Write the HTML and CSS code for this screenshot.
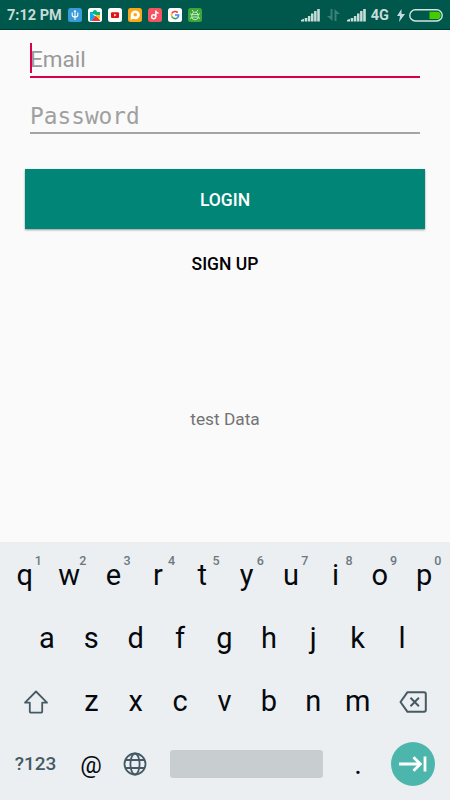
FILE: index.html
```
<!DOCTYPE html>
<html lang="en">
<head>
    <meta charset="UTF-8">
    <meta name="viewport" content="width=device-width, initial-scale=1.0">
    <title>Login</title>
    <link rel="stylesheet" href="styles.css">
</head>
<body>
    <header class="status-bar">
        <span class="time">7:12 PM</span>
        <div class="notifications">
            <svg class="badge usb" viewBox="0 0 14 14"><path d="M7 3v9M4.2 4.5v2.5q0 2 2.8 2t2.8-2v-2.5" fill="none" stroke="#fff" stroke-width="1.1"/><path d="M7 1.5L5.6 4h2.8z" fill="#fff"/></svg>
            <svg class="badge" viewBox="0 0 14 14"><path d="M2 4h3a2 2 0 1 1 4 0h3v3H8L2 5z" fill="#00b58a"/><path d="M2 4l5.5 4.5L3 13H2z" fill="#00aef0"/><path d="M8 7h4v3l-2 1-3-2z" fill="#ffc400"/><path d="M3 13l4.5-5 4.5 4v1z" fill="#f0323c"/></svg>
            <svg class="badge" viewBox="0 0 14 14"><rect x="3" y="4.2" width="8" height="5.8" rx="1" fill="#e11414"/><path d="M6.2 5.8v2.6L8.4 7.1z" fill="#fff"/></svg>
            <svg class="badge chat" viewBox="0 0 14 14"><path d="M2.5 11.8l.3-4a4.6 4.3 0 1 1 2.7 3z" fill="#fff"/><circle cx="7.2" cy="6.8" r="1.8" fill="#fda71a"/></svg>
            <svg class="badge music" viewBox="0 0 14 14"><circle cx="5.7" cy="8.8" r="2" fill="none" stroke="#fff" stroke-width="1.4"/><path d="M7.8 9V2.5q.3 2.2 2.8 2.8" fill="none" stroke="#fff" stroke-width="1.4"/></svg>
            <svg class="badge" viewBox="0 0 14 14" fill="none" stroke-width="1.6"><path d="M9.7 4.6A3.6 3.6 0 0 0 3.8 5.5" stroke="#ea4335"/><path d="M3.8 5.5a3.6 3.6 0 0 0 0 3" stroke="#fbbc05"/><path d="M3.8 8.5a3.6 3.6 0 0 0 5.5 1.3" stroke="#34a853"/><path d="M9.3 9.8Q10.7 8.7 10.6 7H7" stroke="#4285f4"/></svg>
            <svg class="badge debug" viewBox="0 0 14 14" fill="none" stroke="#d6f3cf" stroke-width=".9"><path d="M3.8 6.6a3.3 3.3 0 0 1 6.4 0zM3.8 6.6v2a3.2 3.2 0 0 0 6.4 0v-2M4.4 9h5.2M4.2 2l1.2 1.8M9.8 2L8.6 3.8M2 5.5l1.8 1.3M12 5.5l-1.8 1.3M2 10.5L4 9.4M12 10.5l-2-1.1"/></svg>
        </div>
        <div class="system">
            <svg class="signal" viewBox="0 0 19 14"><path d="M0 13.5V12l3-1.2v2.7zM3.7 13.5V10h2.6v3.5zM6.9 13.5V8h2.5v5.5zM10 13.5V5.5h2.5v8zM13.1 13.5V3h2.5v10.5zM16.2 13.5V1h2.6v12.5z"/></svg>
            <svg class="transfer" viewBox="0 0 13 14"><path d="M3.5 1H5.5V13L0 8H3.5zM7.5 13V1L13 6H9.5V13z"/></svg>
            <svg class="signal" viewBox="0 0 19 14"><path d="M0 13.5V12l3-1.2v2.7zM3.7 13.5V10h2.6v3.5zM6.9 13.5V8h2.5v5.5zM10 13.5V5.5h2.5v8zM13.1 13.5V3h2.5v10.5zM16.2 13.5V1h2.6v12.5z"/></svg>
            <span class="network">4G</span>
            <svg class="bolt" viewBox="0 0 8 13"><path d="M4.5 0L0 7h3L2 13l6-8H4.5z"/></svg>
            <svg class="battery" viewBox="0 0 34 13"><rect x=".8" y=".8" width="32.4" height="11.2" rx="5.6" fill="none" stroke="#d3e5e1" stroke-width="1.4"/><path d="M20.5 2.7H28a3.7 3.7 0 0 1 0 7.4H20.5z" fill="#43cc00"/></svg>
        </div>
    </header>

    <main class="login">
        <div class="field focused">
            <input type="email" placeholder="Email">
            <span class="caret"></span>
        </div>
        <div class="field">
            <input class="mono" type="password" placeholder="Password">
        </div>
        <button class="btn btn-login">LOGIN</button>
        <button class="btn btn-signup">SIGN UP</button>
        <p class="result">test Data</p>
    </main>

    <section class="keyboard">
        <div class="row">
            <span class="key">q<sup>1</sup></span>
            <span class="key">w<sup>2</sup></span>
            <span class="key">e<sup>3</sup></span>
            <span class="key">r<sup>4</sup></span>
            <span class="key">t<sup>5</sup></span>
            <span class="key">y<sup>6</sup></span>
            <span class="key">u<sup>7</sup></span>
            <span class="key">i<sup>8</sup></span>
            <span class="key">o<sup>9</sup></span>
            <span class="key">p<sup>0</sup></span>
        </div>
        <div class="row">
            <span class="key">a</span>
            <span class="key">s</span>
            <span class="key">d</span>
            <span class="key">f</span>
            <span class="key">g</span>
            <span class="key">h</span>
            <span class="key">j</span>
            <span class="key">k</span>
            <span class="key">l</span>
        </div>
        <div class="row">
            <span class="key wide shift">
                <svg width="26" height="26" viewBox="0 0 26 26"><path d="M13 2.5L2 13.7h4.8v9.1q0 .8.8.8h10.8q.8 0 .8-.8v-9.1H24z"/></svg>
            </span>
            <span class="key">z</span>
            <span class="key">x</span>
            <span class="key">c</span>
            <span class="key">v</span>
            <span class="key">b</span>
            <span class="key">n</span>
            <span class="key">m</span>
            <span class="key wide shift">
                <svg class="delete" width="28" height="22" viewBox="0 0 28 22"><path d="M8.5 1.2H25q1.8 0 1.8 1.8v16q0 1.8-1.8 1.8H8.5L1.5 11zM11.5 6.8l8.4 8.4M19.9 6.8l-8.4 8.4"/></svg>
            </span>
        </div>
        <div class="row">
            <span class="key wide symbols">?123</span>
            <span class="key at">@</span>
            <span class="key">
                <svg width="24" height="24" viewBox="0 0 24 24"><circle cx="12" cy="12" r="10.5"/><ellipse cx="12" cy="12" rx="4.6" ry="10.5"/><path d="M2.5 8h19M2.5 16h19"/></svg>
            </span>
            <span class="space"></span>
            <span class="key dot">.</span>
            <span class="key wide">
                <span class="next">
                    <svg width="28" height="18" viewBox="0 0 28 18"><path d="M0 9h21M14.5 2.2L21.3 9l-6.8 6.8M26 1.5v15"/></svg>
                </span>
            </span>
        </div>
    </section>
</body>
</html>
```
FILE: styles.css
```
* {
    box-sizing: border-box;
}

body {
    margin: 0;
    height: 800px;
    display: flex;
    flex-direction: column;
    overflow: hidden;
    background: #fafafa;
    font-family: Roboto, sans-serif;
}

.status-bar {
    height: 30px;
    display: flex;
    align-items: center;
    padding: 1px 7px 0;
    background: #00574b;
    border-bottom: 1px solid #003c2c;
    color: #c7ddd9;
    font-size: 14.5px;
    font-weight: 700;
}

.time {
    width: 61px;
    white-space: nowrap;
}

.notifications {
    display: flex;
    gap: 6px;
}

.badge {
    width: 14px;
    height: 14px;
    border-radius: 2.5px;
    background: #fff;
}

.usb {
    background: #399bd8;
}

.chat {
    background: #fda71a;
}

.music {
    background: #f45362;
}

.debug {
    background: #3ba63b;
}

.system {
    display: flex;
    align-items: center;
    margin-left: auto;
    fill: #c7ddd9;
}

.signal {
    width: 19px;
    height: 14px;
}

.transfer {
    width: 13px;
    height: 14px;
    margin: 0 7px;
    fill: #3c8177;
}

.network {
    margin-left: 5px;
}

.bolt {
    width: 8px;
    height: 13px;
    margin: 0 4px 0 8px;
}

.battery {
    width: 34px;
    height: 13px;
}

.login {
    height: 512px;
    display: flex;
    flex-direction: column;
    padding: 10px 25px 0;
}

.field {
    position: relative;
    height: 38px;
    margin: 0 5px 35px;
    border-bottom: 2px solid #a4a4a4;
}

.field.focused {
    margin-bottom: 18px;
    border-color: #d8004c;
}

.field input {
    display: block;
    width: 100%;
    height: 36px;
    padding: 2px 0 0;
    border: none;
    outline: none;
    background: none;
    font: 22.5px Roboto, sans-serif;
}

.field input.mono {
    padding-top: 4px;
    font: 22.8px "DejaVu Sans Mono", monospace;
}

.field input::placeholder {
    color: #999;
    opacity: 1;
}

.field input.mono::placeholder {
    color: #a0a0a0;
}

.caret {
    position: absolute;
    left: 0;
    top: 3px;
    width: 2px;
    height: 30px;
    background: #d8004c;
}

.btn {
    flex: none;
    padding: 2px 0 0;
    border: none;
    font: 500 17.5px Roboto, sans-serif;
}

.btn-login {
    height: 60px;
    background: #008577;
    color: #fff;
    box-shadow: 0 1px 2px rgba(0, 0, 0, 0.4);
}

.btn-signup {
    height: 68px;
    background: none;
    color: #000;
}

.result {
    margin: 112px 0 0;
    text-align: center;
    font-size: 17.3px;
    line-height: 20px;
    color: #737373;
}

.keyboard {
    height: 258px;
    padding: 1px 3px 0 2px;
    background: #eceff2;
    color: #05090e;
}

.row {
    height: 63px;
    display: flex;
    justify-content: center;
    align-items: center;
}

.key {
    position: relative;
    width: 44.4px;
    flex: none;
    display: flex;
    justify-content: center;
    align-items: center;
    font-size: 29px;
    line-height: 34px;
}

.key.wide {
    width: 66.6px;
}

.key.shift {
    padding-top: 3px;
}

.key sup {
    position: absolute;
    top: -5px;
    right: 5px;
    font-size: 12.5px;
    font-weight: 500;
    line-height: 15px;
    color: #6b797f;
}

.key svg {
    fill: none;
    stroke: #455a64;
    stroke-width: 1.8;
    stroke-linejoin: round;
}

.key .delete {
    stroke-width: 2;
}

.key.symbols {
    font-size: 19px;
    font-weight: 500;
    color: #455a64;
}

.key.at {
    padding-top: 3px;
    font-size: 24px;
}

.space {
    width: 153px;
    height: 28px;
    margin: 0 12.6px;
    border-radius: 3px;
    background: #c8cdd0;
}

.next {
    width: 44px;
    height: 44px;
    display: flex;
    justify-content: center;
    align-items: center;
    border-radius: 50%;
    background: #4db6ac;
}

.key .next svg {
    stroke: #fff;
    stroke-width: 2.8;
    stroke-linejoin: miter;
}
```
